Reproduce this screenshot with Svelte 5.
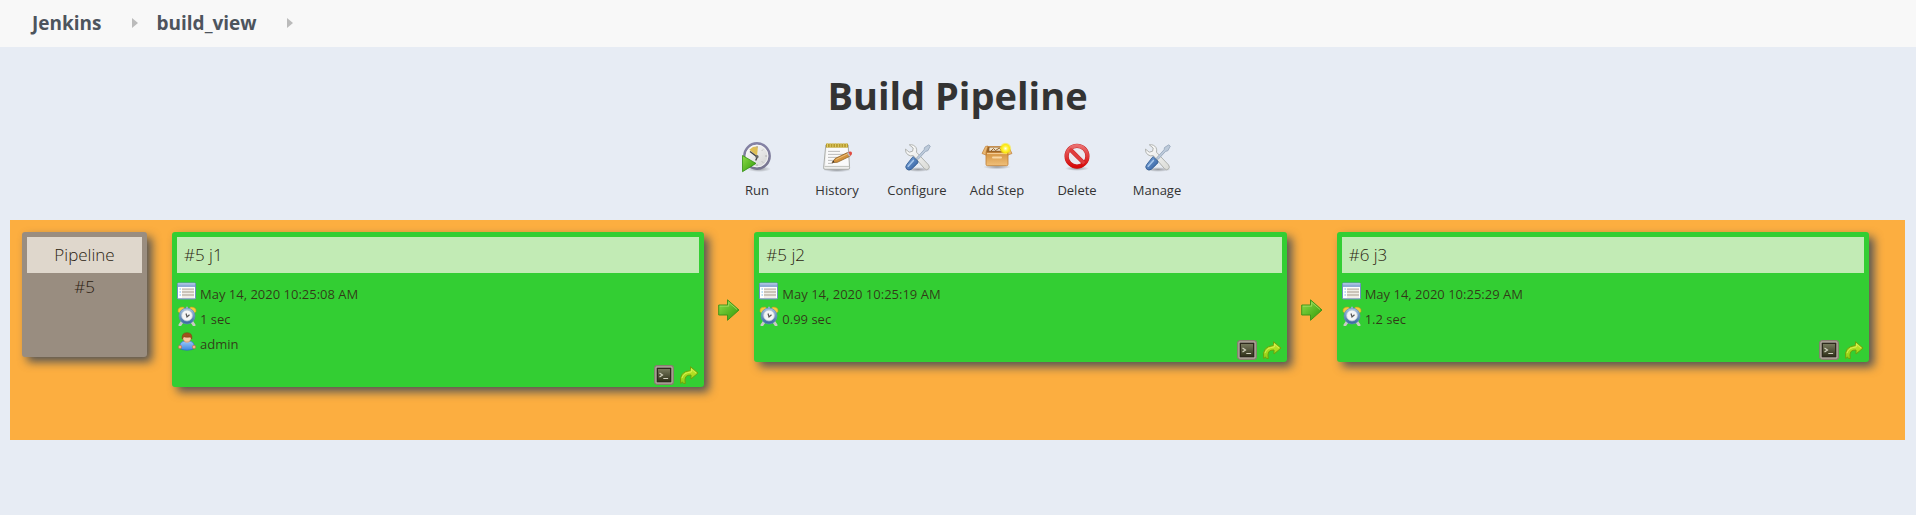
<script>
  const crumbs = ['Jenkins', 'build_view'];
  const actions = [
    { label: 'Run', icon: 'run' },
    { label: 'History', icon: 'history' },
    { label: 'Configure', icon: 'tools' },
    { label: 'Add Step', icon: 'box' },
    { label: 'Delete', icon: 'stop' },
    { label: 'Manage', icon: 'tools' }
  ];
  const builds = [
    { title: '#5 j1', date: 'May 14, 2020 10:25:08 AM', time: '1 sec', user: 'admin' },
    { title: '#5 j2', date: 'May 14, 2020 10:25:19 AM', time: '0.99 sec' },
    { title: '#6 j3', date: 'May 14, 2020 10:25:29 AM', time: '1.2 sec' }
  ];
</script>

<svg class="defs" aria-hidden="true">
  <defs>
    <linearGradient id="g-green" x1="0" y1="0" x2="1" y2="1"><stop offset="0" stop-color="#8fdc4a" /><stop offset="1" stop-color="#2f9a08" /></linearGradient>
    <linearGradient id="g-face" x1="0" y1="0" x2="1" y2="1"><stop offset="0" stop-color="#ffffff" /><stop offset="1" stop-color="#cfcfcf" /></linearGradient>
    <linearGradient id="g-ring" x1="0" y1="0" x2="0" y2="1"><stop offset="0" stop-color="#8583a6" /><stop offset="1" stop-color="#77758f" /></linearGradient>
    <linearGradient id="g-red" x1="0" y1="0" x2="0" y2="1"><stop offset="0" stop-color="#ea6e6e" /><stop offset="1" stop-color="#d60808" /></linearGradient>
    <linearGradient id="g-box" x1="0" y1="0" x2="0" y2="1"><stop offset="0" stop-color="#d2913f" /><stop offset="1" stop-color="#f0c07a" /></linearGradient>
    <linearGradient id="g-blue" x1="0" y1="0" x2="1" y2="1"><stop offset="0" stop-color="#7fa9dc" /><stop offset="1" stop-color="#2c5a9c" /></linearGradient>
    <linearGradient id="g-steel" x1="0" y1="0" x2="1" y2="1"><stop offset="0" stop-color="#ffffff" /><stop offset="1" stop-color="#d9dad6" /></linearGradient>
    <linearGradient id="g-clock" x1="0" y1="0" x2="0" y2="1"><stop offset="0" stop-color="#a9c5e6" /><stop offset="1" stop-color="#35659c" /></linearGradient>
    <linearGradient id="g-shirt" x1="0" y1="0" x2="0" y2="1"><stop offset="0" stop-color="#9dc9fa" /><stop offset="1" stop-color="#3b86df" /></linearGradient>
    <linearGradient id="g-lime" x1="0" y1="0" x2="0" y2="1"><stop offset="0" stop-color="#c6e82a" /><stop offset="1" stop-color="#8fd016" /></linearGradient>
    <linearGradient id="g-screen" x1="0" y1="0" x2="0" y2="1"><stop offset="0" stop-color="#7b7e60" /><stop offset="1" stop-color="#2e2f18" /></linearGradient>
    <radialGradient id="g-glow"><stop offset="0" stop-color="#fffef0" /><stop offset=".35" stop-color="#fff34a" /><stop offset=".65" stop-color="#fbe80e" /><stop offset="1" stop-color="#fbe80e" stop-opacity="0" /></radialGradient>
    <radialGradient id="g-shade"><stop offset="0" stop-color="#000" stop-opacity=".35" /><stop offset="1" stop-color="#000" stop-opacity="0" /></radialGradient>
  </defs>
</svg>

{#snippet icon(name)}
  <svg class="icon-lg" viewBox="0 0 32 32" aria-hidden="true">
    {#if name === 'run'}
      <ellipse cx="18" cy="28" rx="12" ry="3" fill="url(#g-shade)" />
      <circle cx="16" cy="15" r="12.6" fill="url(#g-face)" stroke="url(#g-ring)" stroke-width="2.6" />
      <circle cx="16" cy="15" r="10.9" fill="none" stroke="#f7f7f9" stroke-width=".8" />
      <path d="M16 15 8.3 8.7 12 6l5-.8z" fill="#dfbe55" />
      <path d="M16 5v1.8M16 23.2V25M24.2 15H26M22 8.6l-1 1M22 21.5l-1-1" stroke="#aaa" stroke-width="1" />
      <path d="M9 10.5 16.2 16l-1.5 3.5" fill="none" stroke="#444" stroke-width="1.4" />
      <circle cx="16" cy="15.7" r="1.6" fill="#666" />
      <path d="M1.5 14.5v16.2L15 22.4z" fill="url(#g-green)" stroke="#338f12" stroke-width=".8" />
    {:else if name === 'history'}
      <ellipse cx="16" cy="29" rx="14" ry="2.2" fill="url(#g-shade)" />
      <path d="M4.8 4h22.4l1.4 22.8q.1 1.5-1.4 1.5H4q-1.5 0-1.4-1.5z" fill="#eeeeec" stroke="#a3a5a0" stroke-width=".9" />
      <path d="M5.6 6h20.8l1.1 18.5H4.5z" fill="#fafafa" />
      <path d="M3.6 25.5h24.8" stroke="#c5c7c2" />
      <path d="M5 2.6h22v4H5z" fill="#b79b2a" />
      <path d="M6.5 2v4.6M9.2 2v4.6M11.9 2v4.6M14.6 2v4.6M17.3 2v4.6M20 2v4.6M22.7 2v4.6M25.4 2v4.6" stroke="#dfcb6c" stroke-width="1" />
      <path d="M7 10.4h12M7 13.4h16M7 16.4h12M7 19.4h7M7 22.4h5" stroke="#b5b5b5" stroke-width=".9" />
      <path d="m11 21.6 3.2-4.1L27 11.3l2.1 3.8-12.7 6.2z" fill="#d3923c" stroke="#8f6224" stroke-width=".8" />
      <path d="m14.8 18.6 12-5.8" stroke="#edc07a" stroke-width="1" />
      <path d="m26 11.8 1.4-.7 2.1 3.8-1.4.7z" fill="#b9bcc4" />
      <path d="m27.4 11.1 1.4-.5q1.6-.2 2.2 1.2.5 1.6-1.5 3.1z" fill="#e04b40" />
      <path d="m11 21.6 1.6-2 .8 1.6z" fill="#333" />
    {:else if name === 'tools'}
      <ellipse cx="17" cy="28.5" rx="13" ry="2.4" fill="url(#g-shade)" />
      <path d="M8.3 3.8q4.6-.6 6.7 2.8 1.2 2.2.5 4.6l12 12.7q1.8 2.3 0 4.1-2 1.6-4-.3L12.3 14.6q-3 .9-5.6-1-2.5-2.1-2.2-5.5l3.7 3.1 3.4-1 .6-3.2z" fill="url(#g-steel)" stroke="#a9aca7" stroke-width=".9" />
      <path d="m15.3 17.3 7.8-8.6.4-2.2 4.3-2.7 1.5 1.4-2.4 4.5-2.3.7-7.7 8.2z" fill="#bccada" stroke="#93a3b8" stroke-width=".8" />
      <path d="m12.2 15.7 4.8 4.6q.3 1.8-1.3 2.9l-5.2 5q-2.7 1.8-4.8-.1-2-2.1 0-4.5l4.4-5.6q.8-1.5 2.1-2.3z" fill="url(#g-blue)" stroke="#2d588e" stroke-width=".8" />
      <path d="m7.2 25.3 5.2-5.9" stroke="#a9c9ee" stroke-width="1.5" stroke-linecap="round" />
    {:else if name === 'box'}
      <ellipse cx="16" cy="26" rx="14" ry="2.3" fill="url(#g-shade)" />
      <path d="M6 5.5h20l1.5 6h-23z" fill="#9a6529" stroke="#c98a40" stroke-width=".8" />
      <path d="M8.5 6.5H24l.8 3.300H8.200z" fill="#ede1ca" />
      <path d="m9.500 10.500 3-3 2 2 4-2.500 2 3" stroke="#9a6529" fill="none" />
      <path d="M5 11.500h22v11.800q0 1.400-1.400 1.400H6.400Q5 24.700 5 23.300z" fill="url(#g-box)" stroke="#be7d35" stroke-width=".8" />
      <path d="M5 11.500 7 5l-2.500.4L1 12.500l4 1.600zM27 11.500 25.500 5l2 .4L31 12.500l-4 1.600z" fill="#e9b873" stroke="#b9732a" stroke-width=".6" />
      <path d="M6 12.600h20" stroke="#f7d29c" />
      <path d="M12 16.500h8" stroke="#f8d7a3" stroke-width="2" stroke-linecap="round" />
      <circle cx="24.5" cy="7.5" r="6.2" fill="url(#g-glow)" />
    {:else}
      <ellipse cx="16" cy="27.5" rx="12" ry="2.4" fill="url(#g-shade)" />
      <circle cx="16" cy="15.2" r="10.4" fill="#eae8ee" stroke="#c22020" stroke-width="4.2" />
      <path d="m8.800 8 14.400 14.400" stroke="#c22020" stroke-width="4" />
      <circle cx="16" cy="15.2" r="10.4" fill="none" stroke="url(#g-red)" stroke-width="3.4" />
      <path d="m8.800 8 14.400 14.400" stroke="#e03c3c" stroke-width="3.2" />
    {/if}
  </svg>
{/snippet}

{#snippet small(name)}
  <svg class="icon-sm" viewBox="0 0 20 20" aria-hidden="true">
    {#if name === 'date'}
      <rect x=".5" y="2" width="18" height="16" rx="1" fill="#fff" stroke="#6f8fc0" />
      <path d="M1 2.500h17V6H1z" fill="#8eabd6" />
      <path d="M1 3h17" stroke="#b5c9e6" />
      <path d="M5 8h12v8.500H5z" fill="#e2dbd0" />
      <path d="M5 8h12M5 11h12M5 14h12" stroke="#b5ada3" />
      <path d="M5 9.500h12M5 12.500h12M5 15.500h12" stroke="#f4f1eb" stroke-width=".8" />
      <path d="M2.500 8h1.400M2.500 11h1.400M2.500 14h1.400" stroke="#6fb1ed" />
      <path d="M1 17.500h17" stroke="#9fb0cb" />
    {:else if name === 'time'}
      <path d="m5 16-2 3M15 16l2 3" stroke="#c9cac5" stroke-width="3" stroke-linecap="round" />
      <path d="M1 5.500Q.4.800 6.500 1L8 3 3 7.500zM19 5.500Q19.600.800 13.500 1L12 3l5 4.500z" fill="#f5ce38" stroke="#c29922" stroke-width=".6" />
      <path d="M9 .8h2V3H9z" fill="#a8b8cb" />
      <circle cx="10" cy="10" r="8" fill="url(#g-clock)" stroke="#5f8abb" stroke-width=".7" />
      <circle cx="10" cy="9.5" r="5.4" fill="#f4f5f5" stroke="#b9c6d3" stroke-width=".8" />
      <path d="M9 7.500 10 11 12.500 8.800" fill="none" stroke="#555" stroke-width="1.2" />
    {:else if name === 'user'}
      <ellipse cx="10" cy="18" rx="9" ry="1.5" fill="url(#g-shade)" />
      <path d="M2.700 14.500q.5-3.700 4.300-4.500h6q3.800.8 4.300 4.500L15.500 18.500q-5.500 1.600-11 0z" fill="url(#g-shirt)" stroke="#2f72bd" stroke-width=".7" />
      <circle cx="3" cy="16" r="1.7" fill="#f0b08a" stroke="#bd6d45" stroke-width=".6" />
      <circle cx="17" cy="16" r="1.7" fill="#f0b08a" stroke="#bd6d45" stroke-width=".6" />
      <path d="M7 10q3 3 6 0l-1.500-1.500h-3z" fill="#f7fafd" />
      <circle cx="10" cy="7" r="4.2" fill="#f8c9a4" stroke="#b66a3a" stroke-width=".6" />
      <path d="M5.200 8Q4.400 1.800 10 1.700T14.800 8L13.500 6q-3.500.8-6.800-.3z" fill="#a0521c" stroke="#7e3d10" stroke-width=".5" />
    {:else if name === 'console'}
      <rect x=".8" y=".8" width="18.4" height="18.4" rx="2" fill="#c2bab0" stroke="#897d71" stroke-width="1.4" />
      <rect x="3.3" y="3.3" width="13.4" height="13.4" fill="url(#g-screen)" stroke="#2d2a1c" stroke-width="1.4" />
      <path d="m5.500 8 3 2-3 2M9.300 13.500h4.800" fill="none" stroke="#d0d0bd" stroke-width="1.2" />
    {:else}
      <path d="M1.700 18.500Q-.5 6.500 11.500 5.500V1.700L19 8l-7 6v-4Q4.500 9.300 6.300 18.500H4.500L3.500 17z" fill="url(#g-lime)" stroke="#6da30c" stroke-width="1" stroke-linejoin="round" />
      <path d="M3 13Q4.500 7.500 12.300 7V4l4.700 4" fill="none" stroke="#e0f35c" stroke-width=".8" />
    {/if}
  </svg>
{/snippet}

<header>
  <nav aria-label="Breadcrumb">
    {#each crumbs as crumb}
      <a href="#top">{crumb}</a>
      <svg class="chevron" viewBox="0 0 6 10" aria-hidden="true"><path d="M0 0 6 5 0 10z" /></svg>
    {/each}
  </nav>
</header>

<main>
  <h1>Build Pipeline</h1>
  <div class="toolbar">
    {#each actions as action}
      <a href="#top">{@render icon(action.icon)}<span>{action.label}</span></a>
    {/each}
  </div>

  <section class="pipeline">
    <div class="revision">
      <h2>Pipeline</h2>
      <p>#5</p>
    </div>
    {#each builds as build, i}
      {#if i > 0}
        <svg class="next" viewBox="0 0 22 22" aria-hidden="true">
          <path d="M.7 6h8.800V.8L21 11 9.500 21.300V16H.7z" fill="url(#g-green)" stroke="#43941a" stroke-linejoin="round" />
          <path d="M1.800 7.200h8.900V3.300l8.300 7.200" fill="none" stroke="#a4dd66" stroke-width=".8" />
        </svg>
      {/if}
      <article class="card">
        <h2>{build.title}</h2>
        <ul>
          <li>{@render small('date')}{build.date}</li>
          <li>{@render small('time')}{build.time}</li>
          {#if build.user}<li>{@render small('user')}{build.user}</li>{/if}
        </ul>
        <footer>
          <button type="button" aria-label="Console output">{@render small('console')}</button>
          <button type="button" aria-label="Re-run">{@render small('rerun')}</button>
        </footer>
      </article>
    {/each}
  </section>
</main>

<style>
  :global(body) {
    margin: 0;
    background: #fff;
    color: #333;
    font-family: "Open Sans", "Noto Sans", sans-serif;
    font-size: 13px;
  }
  svg { display: block; flex: none; }
  .defs { position: absolute; width: 0; height: 0; }
  header { background: #f8f8f8; }
  nav {
    display: flex;
    align-items: center;
    box-sizing: border-box;
    height: 47px;
    padding: 0 0 2px 32px;
  }
  nav a {
    color: #4d545d;
    font-size: 19px;
    font-weight: 700;
    line-height: 24px;
    text-decoration: none;
  }
  .chevron { width: 6px; height: 10px; margin: 0 19px 0 30px; fill: #bbb; }
  main { padding: 20px 11px 75px 10px; background: #e7ecf4; }
  h1 {
    margin: 0;
    color: #333;
    font-size: 38px;
    font-weight: 700;
    line-height: 56px;
    text-align: center;
  }
  .toolbar { display: flex; justify-content: center; height: 97px; padding-right: 1px; }
  .toolbar a {
    display: flex;
    flex-direction: column;
    align-items: center;
    width: 80px;
    padding-top: 18px;
    color: #333;
    line-height: 20px;
    text-decoration: none;
  }
  .icon-lg { width: 32px; height: 32px; margin-bottom: 7px; }
  .icon-sm { width: 20px; height: 20px; }
  .pipeline {
    display: flex;
    align-items: flex-start;
    padding: 12px 36px 53px 12px;
    background: #fcae40;
  }
  .revision, .card {
    box-sizing: border-box;
    border-radius: 3px;
    box-shadow: 5px 5px 10px #555;
    color: rgba(50, 30, 20, .85);
  }
  .revision {
    flex: none;
    width: 125px;
    height: 125px;
    margin-right: 25px;
    padding: 5px;
    background: #998d80;
    text-align: center;
  }
  h2 {
    margin: 0;
    background: #c2ebb5;
    color: #2b1c10;
    font-size: 17px;
    font-weight: 300;
    line-height: 36px;
  }
  .revision h2 { background: #dfd7cc; }
  .revision p { margin: 0; color: #2b1c10; font-size: 17px; font-weight: 300; line-height: 28px; }
  .card { flex: 1; padding: 5px 5px 2px; background: #33ce33; }
  .card h2 { padding-left: 7px; }
  ul { margin: 8px 0 0; padding: 0; list-style: none; }
  li { display: flex; align-items: flex-start; gap: 3px; height: 25px; line-height: 26px; }
  footer { display: flex; align-items: flex-end; justify-content: flex-end; gap: 5px; height: 29px; }
  button { padding: 0; border: 0; background: none; cursor: pointer; }
  .next { align-self: center; width: 22px; height: 22px; margin: 0 14px; }
</style>
